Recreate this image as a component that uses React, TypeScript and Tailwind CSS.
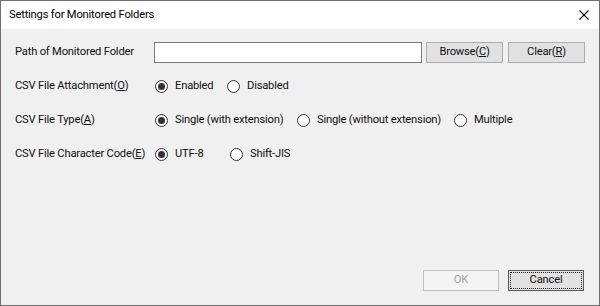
import React from "react";

const font = { fontFamily: 'Roboto, "Noto Sans", sans-serif' };

function Radio({ checked, label, w }: { checked?: boolean; label: string; w?: string }) {
  return (
    <div className={`flex items-center shrink-0 ${w ?? ""}`}>
      <div className="ml-[1px] w-[13px] h-[13px] rounded-full border border-[#333333] bg-white flex items-center justify-center shrink-0">
        {checked && <div className="w-[7px] h-[7px] rounded-full bg-[#333333]" />}
      </div>
      <span className="ml-[7px] whitespace-nowrap">{label}</span>
    </div>
  );
}

function Label({ children }: { children: React.ReactNode }) {
  return <div className="w-[139px] shrink-0 whitespace-nowrap">{children}</div>;
}

export default function App() {
  return (
    <div
      className="w-[600px] h-[306px] border border-[#6f6f6f] flex flex-col text-[11.2px] tracking-[-0.2px] text-[#111111] bg-[#f0f0f0] overflow-hidden"
      style={font}
    >
      <div className="h-[28px] bg-white flex items-center justify-between pl-[8px] pr-[10px] shrink-0">
        <span className="text-black">Settings for Monitored Folders</span>
        <svg width="10" height="10" viewBox="0 0 10 10">
          <path d="M0.5 0.5 L9.5 9.5 M9.5 0.5 L0.5 9.5" stroke="#000" strokeWidth="1.1" />
        </svg>
      </div>
      <div className="flex-1 flex flex-col pl-[14px] pr-[14px] pt-[13px] pb-[14px]">
        <div className="flex flex-col gap-[13px]">
          <div className="h-[21px] flex items-center">
            <Label>Path of Monitored Folder</Label>
            <div className="w-[268px] h-[21px] bg-white border border-[#7a7a7a] shrink-0" />
            <button className="ml-[4px] w-[77px] h-[21px] bg-[#e1e1e1] border border-[#adadad] flex items-center justify-center shrink-0">
              <span>
                Browse(<u>C</u>)
              </span>
            </button>
            <button className="ml-[5px] w-[77px] h-[21px] bg-[#e1e1e1] border border-[#adadad] flex items-center justify-center shrink-0">
              <span>
                Clear(<u>R</u>)
              </span>
            </button>
          </div>
          <div className="h-[21px] flex items-center">
            <Label>
              CSV File Attachment(<u>O</u>)
            </Label>
            <Radio checked label="Enabled" w="w-[72px]" />
            <Radio label="Disabled" />
          </div>
          <div className="h-[21px] flex items-center">
            <Label>
              CSV File Type(<u>A</u>)
            </Label>
            <Radio checked label="Single (with extension)" w="w-[142px]" />
            <Radio label="Single (without extension)" w="w-[157px]" />
            <Radio label="Multiple" />
          </div>
          <div className="h-[21px] flex items-center">
            <Label>
              CSV File Character Code(<u>E</u>)
            </Label>
            <Radio checked label="UTF-8" w="w-[75px]" />
            <Radio label="Shift-JIS" />
          </div>
        </div>
        <div className="flex-1" />
        <div className="flex justify-end items-center gap-[9px] pr-[1px]">
          <button className="w-[76px] h-[21px] bg-[#f4f4f4] border border-[#bfbfbf] text-[#a3a3a3] flex items-center justify-center">
            OK
          </button>
          <button className="w-[76px] h-[21px] bg-[#e1e1e1] border border-[#5a5a5a] p-[1px] flex">
            <div className="flex-1 border border-dotted border-[#222222] flex items-center justify-center">
              Cancel
            </div>
          </button>
        </div>
      </div>
    </div>
  );
}
